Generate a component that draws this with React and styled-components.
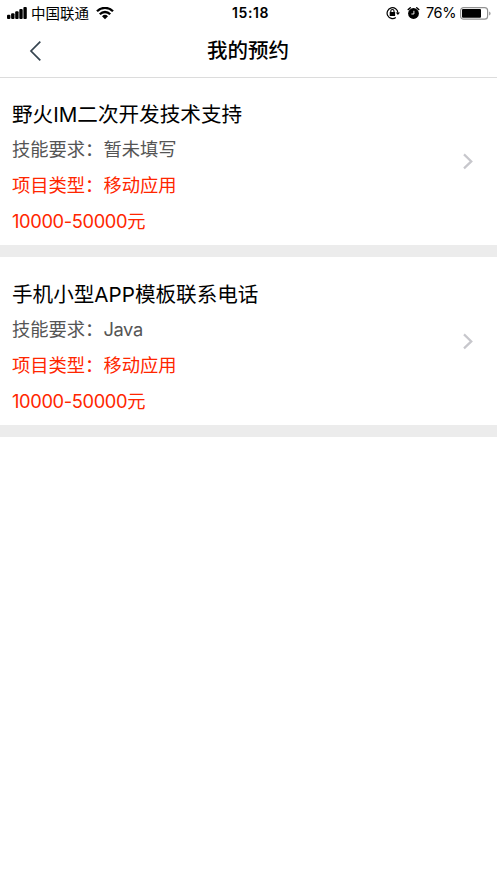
import React from 'react';
import styled, { createGlobalStyle } from 'styled-components';

const appointments = [
  {
    id: 1,
    title: '野火IM二次开发技术支持',
    skill: '暂未填写',
    type: '移动应用',
    price: '10000-50000',
  },
  {
    id: 2,
    title: '手机小型APP模板联系电话',
    skill: 'Java',
    type: '移动应用',
    price: '10000-50000',
  },
];

const isLatin = (text) => /^[\w\s-]+$/.test(text);

const SignalIcon = () => (
  <svg width="20" height="13" viewBox="0 0 20 13">
    <rect x="0" y="7.8" width="3.4" height="4.2" rx="1" />
    <rect x="4.1" y="6.2" width="3.4" height="5.8" rx="1" />
    <rect x="8.2" y="4.2" width="3.4" height="7.8" rx="1" />
    <rect x="12.3" y="2.1" width="3.4" height="9.9" rx="1" />
    <rect x="16.4" y="0" width="3.4" height="12" rx="1" />
  </svg>
);

const WifiIcon = () => (
  <svg width="18" height="13" viewBox="0 0 18 13">
    <g fill="none" stroke="#000" strokeWidth="2.3">
      <path d="M1 4.2a11.4 11.4 0 0 1 16 0" />
      <path d="M3.8 7.2a7.3 7.3 0 0 1 10.4 0" />
    </g>
    <path d="M9 12.2 6 9.3a4.3 4.3 0 0 1 6 0z" />
  </svg>
);

const LockIcon = () => (
  <svg width="15" height="13" viewBox="0 0 15 13">
    <path
      d="M11.9 5.8A5.4 5.4 0 1 0 9.8 10.4"
      fill="none"
      stroke="#000"
      strokeWidth="1.2"
    />
    <path d="M9.8 5.4h4.2l-2.1 2.7z" />
    <rect x="3.7" y="5.1" width="5.4" height="4" rx="0.5" />
    <path d="M4.8 5.6V4.1a1.6 1.6 0 0 1 3.2 0v1.5" fill="none" stroke="#000" strokeWidth="1.1" />
  </svg>
);

const AlarmIcon = () => (
  <svg width="13" height="13" viewBox="0 0 13 13">
    <circle cx="6.5" cy="6.5" r="5.4" />
    <path d="M1.2 2.6 3.3 0.8M11.8 2.6 9.7 0.8" stroke="#000" strokeWidth="1.4" strokeLinecap="round" />
    <path d="M6.9 3.8V7H4.4" fill="none" stroke="#fff" strokeWidth="0.9" />
  </svg>
);

const BatteryIcon = () => (
  <svg width="32" height="13" viewBox="0 0 32 13">
    <rect x="0.6" y="0.6" width="27" height="11.6" rx="3" fill="none" stroke="#929292" strokeWidth="1.2" />
    <rect x="2" y="2" width="19" height="8.8" rx="1" />
    <path d="M29.2 4.4c1.8.7 1.8 3.5 0 4.2z" fill="#929292" />
  </svg>
);

const App = () => (
  <>
    <GlobalStyle />
    <Page>
      <StatusBar>
        <StatusLeft>
          <SignalIcon />
          <Carrier>中国联通</Carrier>
          <WifiIcon />
        </StatusLeft>
        <Clock>15:18</Clock>
        <StatusRight>
          <LockIcon />
          <AlarmIcon />
          <Percent>76%</Percent>
          <BatteryIcon />
        </StatusRight>
      </StatusBar>

      <NavBar>
        <BackButton aria-label="返回">
          <svg width="13" height="22" viewBox="0 0 13 22">
            <path d="M11.3 1.6 2 11l9.3 9.4" fill="none" stroke="#354450" strokeWidth="1.7" />
          </svg>
        </BackButton>
        <NavTitle>我的预约</NavTitle>
      </NavBar>

      <List>
        {appointments.map((item) => (
          <Card key={item.id}>
            <CardBody>
              <CardTitle>{item.title}</CardTitle>
              <CardLine>
                技能要求：<Value $tight={isLatin(item.skill)}>{item.skill}</Value>
              </CardLine>
              <CardLine $accent>项目类型：{item.type}</CardLine>
              <CardLine $accent>
                <Value $tight={isLatin(item.price)}>{item.price}</Value>元
              </CardLine>
            </CardBody>
            <svg width="12" height="18" viewBox="0 0 12 18">
              <path d="M2 2.4l7.3 7L2 16.4" fill="none" stroke="#c7c7cc" strokeWidth="2.2" />
            </svg>
          </Card>
        ))}
      </List>
    </Page>
  </>
);

export default App;

// Styled Components
const GlobalStyle = createGlobalStyle`
  * {
    box-sizing: border-box;
  }

  body {
    margin: 0;
    background: #fff;
    font-family: Inter, 'Noto Sans CJK SC', sans-serif;
  }

  svg {
    display: block;
    flex-shrink: 0;
  }
`;

const Page = styled.div`
  min-height: 100vh;
  background: #fff;
  color: #000;
`;

const StatusBar = styled.header`
  display: grid;
  grid-template-columns: 1fr auto 1fr;
  align-items: center;
  height: 25px;
  padding: 0 5px 0 7px;
`;

const StatusLeft = styled.div`
  display: flex;
  align-items: center;
`;

const StatusRight = styled.div`
  display: flex;
  align-items: center;
  justify-content: flex-end;

  svg + svg {
    margin-left: 6px;
  }
`;

const Carrier = styled.span`
  margin: 0 7px 0 4px;
  font-size: 14.5px;
  line-height: 25px;
`;

const Clock = styled.span`
  margin-left: 2px;
  font-size: 14px;
  font-weight: 600;
  line-height: 26px;
  letter-spacing: 0.6px;
`;

const Percent = styled.span`
  margin: 0 4px 0 6px;
  font-size: 14.5px;
  line-height: 24px;
  letter-spacing: -0.4px;
`;

const NavBar = styled.nav`
  display: grid;
  grid-template-columns: 70px 1fr 71px;
  align-items: center;
  height: 53px;
  border-bottom: 1px solid #dcdcdc;
`;

const BackButton = styled.button`
  display: flex;
  padding: 0 0 0 29px;
  border: none;
  background: none;
`;

const NavTitle = styled.h1`
  margin: 0;
  font-size: 20.5px;
  font-weight: 500;
  line-height: 52px;
  text-align: center;
`;

const List = styled.main`
  display: flex;
  flex-direction: column;
  margin-top: -1px;
`;

const Card = styled.article`
  display: flex;
  align-items: center;
  justify-content: space-between;
  height: 180px;
  padding: 0 23px 0 12px;
  border-bottom: 12px solid #ececec;
`;

const CardBody = styled.div`
  padding-top: 12px;
`;

const CardTitle = styled.h2`
  margin: 0;
  padding-top: 4px;
  font-size: 20.6px;
  font-weight: 400;
  line-height: 32px;
`;

const CardLine = styled.p`
  margin: 0;
  color: ${(props) => (props.$accent ? '#ff2600' : '#555')};
  font-size: 18.3px;
  line-height: 36px;
`;

const Value = styled.span`
  letter-spacing: ${(props) => (props.$tight ? '-0.37px' : 'normal')};
`;
